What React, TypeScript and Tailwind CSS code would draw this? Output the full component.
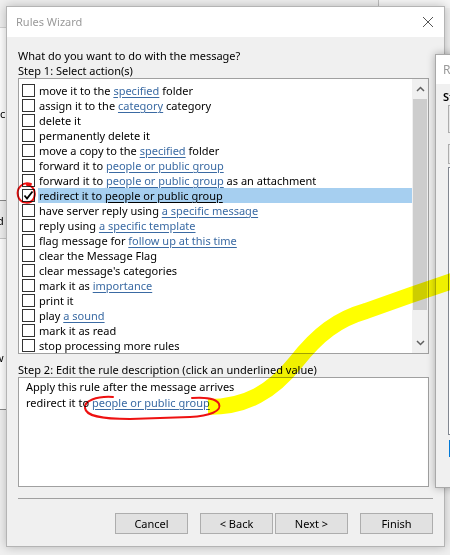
import React from "react";

type Action = [string, string?, string?];

const ACTIONS: Action[] = [
  ["move it to the ", "specified", " folder"],
  ["assign it to the ", "category", " category"],
  ["delete it"],
  ["permanently delete it"],
  ["move a copy to the ", "specified", " folder"],
  ["forward it to ", "people or public group"],
  ["forward it to ", "people or public group", " as an attachment"],
  ["redirect it to ", "people or public group"],
  ["have server reply using ", "a specific message"],
  ["reply using ", "a specific template"],
  ["flag message for ", "follow up at this time"],
  ["clear the Message Flag"],
  ["clear message's categories"],
  ["mark it as ", "importance"],
  ["print it"],
  ["play ", "a sound"],
  ["mark it as read"],
  ["stop processing more rules"],
];

const SELECTED = 7;

function CheckBox({ checked }: { checked: boolean }) {
  return (
    <div className="flex h-[13px] w-[13px] flex-shrink-0 items-center justify-center border border-[#333333] bg-white">
      {checked && (
        <svg width="11" height="11" viewBox="0 0 11 11">
          <path d="M1.5 5.5 L4 8.5 L9.5 1.5" fill="none" stroke="#000" strokeWidth="1.8" />
        </svg>
      )}
    </div>
  );
}

function ActionRow({ action, selected }: { action: Action; selected: boolean }) {
  const [before, link, after] = action;
  return (
    <div className="flex h-[15px] items-center">
      <div className="ml-[3px] mr-[3px]">
        <CheckBox checked={selected} />
      </div>
      <div
        className={`flex h-[15px] flex-1 items-center whitespace-pre pl-[1px] ${
          selected ? "bg-[#a6cff0]" : ""
        }`}
      >
        <span>{before}</span>
        {link && (
          <span
            className={`underline underline-offset-[2px] ${
              selected ? "text-black" : "text-[#3a6aa3]"
            }`}
          >
            {link}
          </span>
        )}
        {after && <span>{after}</span>}
      </div>
    </div>
  );
}

function ScrollBar() {
  return (
    <div className="flex w-[16px] flex-col bg-[#f0f0f0]">
      <div className="flex h-[20px] items-center justify-center">
        <svg width="9" height="6" viewBox="0 0 9 6">
          <path d="M1 5 L4.5 1.5 L8 5" fill="none" stroke="#606060" strokeWidth="1.5" />
        </svg>
      </div>
      <div className="mx-[1px] h-[211px] bg-[#cdcdcd]" />
      <div className="flex-1" />
      <div className="flex h-[20px] items-center justify-center">
        <svg width="9" height="6" viewBox="0 0 9 6">
          <path d="M1 1 L4.5 4.5 L8 1" fill="none" stroke="#606060" strokeWidth="1.5" />
        </svg>
      </div>
    </div>
  );
}

function WizardButton({ label }: { label: string }) {
  return (
    <button
      type="button"
      className="h-[21px] w-[73px] border border-[#adadad] bg-[#e1e1e1] text-[11px] text-black"
    >
      {label}
    </button>
  );
}

function BackgroundWindows() {
  return (
    <>
      {/* window behind, left side */}
      <div className="absolute left-0 top-[27px] h-[1px] w-[20px] bg-[#d4d4d4]" />
      <div className="absolute left-0 top-[28px] h-[172px] w-[20px] bg-white" />
      <div className="absolute left-0 top-[106px] text-[11px] leading-[15px] text-black">c t</div>
      <div className="absolute left-0 top-[200px] h-[1px] w-[20px] bg-[#8a8a8a]" />
      <div className="absolute left-[-3px] top-[213px] text-[11px] leading-[15px] text-black">d</div>
      <div className="absolute left-0 top-[238px] h-[1px] w-[20px] bg-[#c8c8c8]" />
      <div className="absolute left-0 top-[239px] h-[170px] w-[20px] bg-white" />
      <div className="absolute left-[-5px] top-[350px] text-[11px] leading-[15px] text-black">w</div>
      <div className="absolute left-0 top-[409px] h-[1px] w-[20px] bg-[#8a8a8a]" />
      <div className="absolute left-[378px] top-0 h-[8px] w-[1px] bg-[#bdbdbd]" />
      <div className="absolute left-[379px] top-0 h-[8px] w-[71px] bg-[#f7f7f7]" />
    </>
  );
}

function RightWindow() {
  return (
    <div className="absolute left-[435px] top-[54px] flex h-[434px] w-[40px] flex-col border border-[#a9a9a9] bg-[#f0f0f0] shadow-[0_0_8px_rgba(0,0,0,0.3)]">
      <div className="flex h-[29px] items-center bg-white pl-[7px] text-[12px] text-[#9a9a9a]">
        Rules
      </div>
      <div className="pl-[7px] pt-[5px] text-[11px] font-semibold leading-[15px] text-black">Step</div>
      <div className="ml-[12px] mt-[1px] h-[28px] border border-[#adadad] bg-[#e8e8e8]" />
      <div className="ml-[12px] mt-[11px] h-[20px] border border-[#adadad] bg-[#e8e8e8]" />
      <div className="ml-[12px] mt-[3px] h-[268px] border border-[#828790] bg-white" />
      <div className="ml-[13px] mt-[5px] h-[17px] bg-[#0078d7]" />
    </div>
  );
}

function Annotations() {
  return (
    <svg
      className="pointer-events-none absolute left-0 top-0 mix-blend-multiply"
      width="450"
      height="555"
      viewBox="0 0 450 555"
    >
      <path
        d="M208 407 C246 407 272 392 296 362 C318 334 338 319 366 311 L411 295 L455 280"
        fill="none"
        stroke="#ffff00"
        strokeWidth="16"
        strokeLinecap="butt"
        strokeLinejoin="round"
      />
      <path
        d="M31 184 C23 181 16 188 18 196 C20 204 31 205 34 198 C36 192 34 186 27 185"
        fill="none"
        stroke="#ee1111"
        strokeWidth="2"
        strokeLinecap="round"
      />
      <path
        d="M113 397 C96 396 84 401 85 408 C86 416 100 419 130 419 L190 417 C210 416 222 411 219 404 C217 399 206 397 192 398"
        fill="none"
        stroke="#ee1111"
        strokeWidth="2"
        strokeLinecap="round"
      />
    </svg>
  );
}

export default function App() {
  return (
    <div className="relative h-[555px] w-[450px] overflow-hidden bg-[#f0f0f0] font-['Noto_Sans',sans-serif] text-[11px] text-black">
      <BackgroundWindows />

      <div className="absolute left-[6px] top-[6px] flex h-[541px] w-[439px] flex-col border border-[#b4b4b4] bg-[#f0f0f0] shadow-[0_0_10px_rgba(0,0,0,0.25)]">
        <div className="flex h-[30px] items-center justify-between bg-white pl-[9px] pr-[10px]">
          <span className="text-[11px] text-[#9a9a9a]">Rules Wizard</span>
          <svg width="12" height="12" viewBox="0 0 12 12">
            <path d="M1 1 L11 11 M11 1 L1 11" stroke="#555" strokeWidth="1" />
          </svg>
        </div>

        <div className="flex flex-col px-[11px] pt-[11px] leading-[15px]">
          <div>What do you want to do with the message?</div>
          <div>Step 1: Select action(s)</div>

          <div className="flex h-[276px] w-[411px] border border-[#a0a0a0] bg-white">
            <div className="flex flex-1 flex-col pt-[4px]">
              {ACTIONS.map((a, i) => (
                <ActionRow key={i} action={a} selected={i === SELECTED} />
              ))}
            </div>
            <ScrollBar />
          </div>

          <div className="mt-[8px]">Step 2: Edit the rule description (click an underlined value)</div>
          <div className="h-[110px] w-[411px] border border-[#a0a0a0] bg-white pl-[7px] pt-[1px] leading-[16px]">
            <div>Apply this rule after the message arrives</div>
            <div className="whitespace-pre">
              redirect it to <span className="text-[#3a6aa3] underline underline-offset-[2px]">people or public group</span>
            </div>
          </div>

          <div className="mt-[11px] h-[1px] w-[415px] bg-[#a0a0a0]" />

          <div className="mt-[14px] flex w-[415px] justify-end">
            <WizardButton label="Cancel" />
            <div className="ml-[12px] flex gap-[2px]">
              <WizardButton label="< Back" />
              <WizardButton label="Next >" />
            </div>
            <div className="ml-[12px]">
              <WizardButton label="Finish" />
            </div>
          </div>
        </div>
      </div>

      <RightWindow />
      <Annotations />
    </div>
  );
}
